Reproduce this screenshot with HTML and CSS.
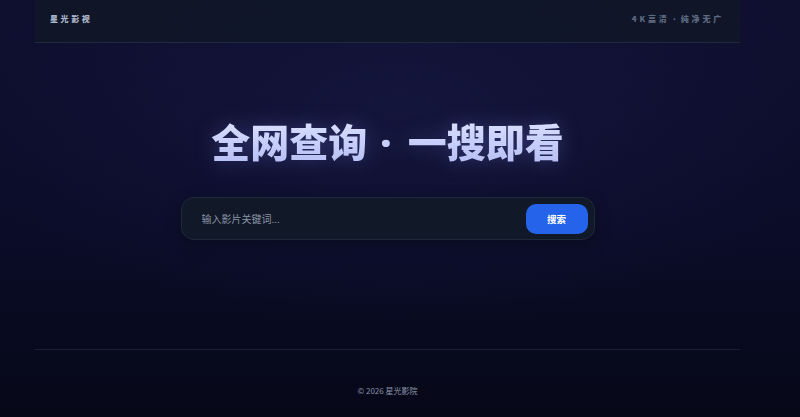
FILE: index.html
```html
<!DOCTYPE html>
<html lang="zh">
<head>
<meta charset="utf-8">
<title>星光影视</title>
<link rel="stylesheet" href="styles.css">
</head>
<body>
<div class="page">
  <header class="header">
    <div class="brand">星光影视</div>
    <div class="tagline">4K高清<span class="dot"> · </span>纯净无广</div>
  </header>
  <main class="main">
    <h1 class="title">全网查询<span class="dot"> · </span>一搜即看</h1>
    <form class="search" onsubmit="return false">
      <input class="search-input" type="text" placeholder="输入影片关键词...">
      <button class="search-btn" type="submit">搜索</button>
    </form>
  </main>
  <footer class="footer">© 2026 星光影院</footer>
</div>
</body>
</html>
```
FILE: styles.css
```css
html, body {
  margin: 0;
  padding: 0;
  height: 100%;
}
body {
  font-family: "Noto Sans CJK SC", "Noto Sans", sans-serif;
  background:
    radial-gradient(ellipse 55% 50% at 50% 28%, rgba(28, 30, 78, 0.45), rgba(20, 20, 60, 0) 100%),
    linear-gradient(180deg, #0f0f30 0%, #0b0c28 55%, #060818 100%);
  color: #e2e8f0;
  overflow: hidden;
}
.page {
  width: 705px;
  margin-left: 35px;
  height: 417px;
  display: flex;
  flex-direction: column;
}
.header {
  height: 43px;
  box-sizing: border-box;
  background: rgba(17, 24, 39, 0.85);
  border-bottom: 1px solid #1f2a3d;
  display: flex;
  align-items: center;
  justify-content: space-between;
  padding: 0 16px 0 15px;
}
.brand {
  font-size: 8px;
  font-weight: 900;
  letter-spacing: 2.6px;
  color: #a9b4c7;
  margin-top: -5px;
}
.tagline {
  font-size: 8px;
  font-weight: 900;
  letter-spacing: 2.8px;
  color: #5d6a80;
  margin-top: -5px;
}
.tagline .dot {
  font-family: "Noto Sans", sans-serif;
  letter-spacing: 1.6px;
}
.main {
  flex: 0 0 307px;
  display: flex;
  flex-direction: column;
  align-items: center;
  border-bottom: 1px solid #1a1e38;
  box-sizing: border-box;
}
.title {
  margin: 67px 0 0;
  font-size: 39px;
  line-height: 60px;
  font-weight: 900;
  background: linear-gradient(180deg, #e0e7ff 0%, #b1b9f4 100%);
  -webkit-background-clip: text;
  background-clip: text;
  color: transparent;
  filter: drop-shadow(0 0 10px rgba(129, 140, 248, 0.3));
}
.title .dot {
  font-family: "Noto Sans", sans-serif;
  letter-spacing: 3px;
  font-weight: 900;
}
.search {
  margin-top: 25px;
  width: 414px;
  height: 43px;
  box-sizing: border-box;
  background: #111827;
  border: 1px solid #1e293b;
  border-radius: 13px;
  display: flex;
  align-items: center;
  padding: 0 6px 0 20px;
  box-shadow: 0 4px 16px rgba(0, 0, 0, 0.3);
}
.search-input {
  flex: 1;
  background: transparent;
  border: none;
  outline: none;
  font-family: inherit;
  font-size: 10px;
  color: #e2e8f0;
  padding: 0;
}
.search-input::placeholder {
  color: #8b95a7;
}
.search-btn {
  width: 62px;
  height: 30px;
  border: none;
  border-radius: 10px;
  background: #2563eb;
  color: #ffffff;
  font-family: inherit;
  font-size: 9.5px;
  font-weight: 700;
}
.footer {
  margin-top: 35px;
  text-align: center;
  font-size: 8px;
  color: #8b93a7;
  font-family: "Noto Sans CJK SC", "Noto Sans", sans-serif;
}
```
